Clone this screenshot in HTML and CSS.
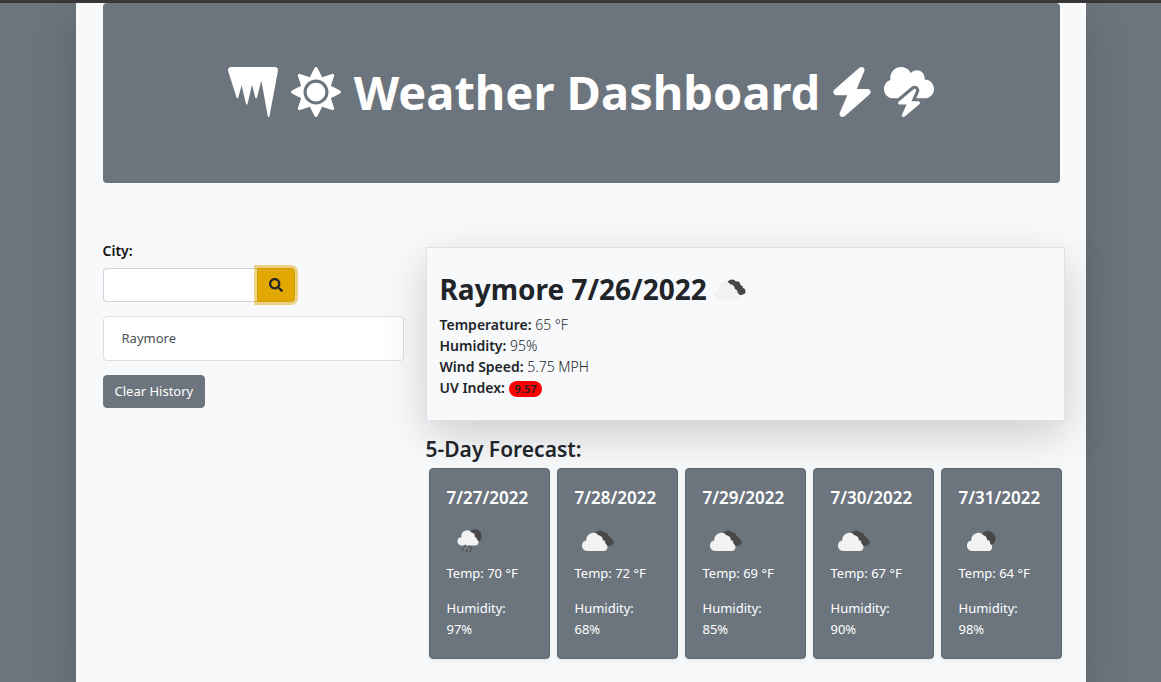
FILE: index.html
```html
<!DOCTYPE html>
<html lang="en">
<head>
<meta charset="utf-8">
<meta name="viewport" content="width=device-width, initial-scale=1">
<title>Weather Dashboard</title>
<link rel="stylesheet" href="styles.css">
</head>
<body>
<svg class="sprite" aria-hidden="true">
  <symbol id="clouds" viewBox="0 0 44 44">
    <path fill="#484848" d="M20 16a5 5 0 0 1 9-2.500a3.500 3.500 0 0 1 4.500 3.500a3 3 0 0 1 2.500 3a3.300 3.300 0 0 1-.5 6.500a4 4 0 0 1-5-1z"/>
    <path fill="#f2f2f2" d="M12 32a5.300 5.300 0 0 1-.7-10.500a7 7 0 0 1 12.200-5.200a5 5 0 0 1 4.300 4.600a3.400 3.400 0 0 1 2.600 3.700a4 4 0 0 1-.8 7.400z"/>
  </symbol>
  <symbol id="night-cloud" viewBox="0 0 44 44">
    <circle cx="29" cy="19.500" r="7.600" fill="#484848"/>
    <path fill="#f2f2f2" d="M13 32a5.300 5.300 0 0 1-.7-10.500a7 7 0 0 1 12.200-5.200a5 5 0 0 1 3.600 4.600a3.400 3.400 0 0 1 3 3.700a4 4 0 0 1-.8 7.400z"/>
  </symbol>
  <symbol id="night-rain" viewBox="0 0 44 44">
    <circle cx="28" cy="17" r="6.700" fill="#484848"/>
    <path fill="#f2f2f2" d="M15 26.500a4.300 4.300 0 0 1-.5-8.600a5.600 5.600 0 0 1 10-4.300a4 4 0 0 1 3.300 4.200a3 3 0 0 1 2.200 2.700a3.200 3.200 0 0 1-1.500 6z"/>
    <path stroke="#484848" stroke-width="1.400" stroke-linecap="round" d="M18.300 26.300l-.5 1M22.800 27.300l-.5 1M16.300 29.800l-.5 1M20 31.200l-.5 1M24.600 29l-.5 1M23.600 32l-.4.800"/>
  </symbol>
</svg>
<main class="page">
  <header class="banner">
    <h1 class="banner-title">
      <svg class="banner-icon" viewBox="0 0 512 512" aria-hidden="true"><path d="M511.400 37.900C515.100 18.200 500 0 480 0H32C10.600 0-4.800 20.700 1.400 41.200l87.100 273.400c2.500 7.200 12.700 7.200 15.100 0L140 190.500l44.200 187.300c1.900 8.300 13.700 8.300 15.600 0l46.500-196.900 34.100 133.400c2.300 7.600 13 7.600 15.300 0l45.800-172.500 66.700 363.800c1.700 8.600 14 8.600 15.700 0z"/></svg>
      <svg class="banner-icon" viewBox="0 0 512 512" aria-hidden="true"><path d="M256 160c-52.900 0-96 43.100-96 96s43.100 96 96 96 96-43.100 96-96-43.100-96-96-96zm246.400 80.500l-94.700-47.300 33.500-100.400c4.500-13.600-8.400-26.500-21.900-21.900l-100.400 33.500-47.400-94.800c-6.400-12.800-24.600-12.800-31 0l-47.300 94.700L92.700 70.800c-13.600-4.500-26.500 8.400-21.900 21.900l33.500 100.400-94.700 47.400c-12.800 6.400-12.800 24.600 0 31l94.700 47.300-33.500 100.500c-4.500 13.600 8.400 26.500 21.900 21.900l100.400-33.500 47.300 94.700c6.400 12.800 24.600 12.800 31 0l47.300-94.700 100.400 33.500c13.600 4.500 26.500-8.400 21.900-21.900l-33.500-100.400 94.700-47.300c13-6.500 13-24.700.2-31.100zm-155.900 106c-49.900 49.900-131.100 49.900-181 0-49.900-49.900-49.900-131.100 0-181 49.900-49.900 131.100-49.900 181 0 49.900 49.900 49.900 131.100 0 181z"/></svg>
      <span>Weather Dashboard</span>
      <svg class="banner-icon narrow" viewBox="0 0 384 512" aria-hidden="true"><path d="M240.500 224H352C365.300 224 377.300 232.300 381.100 244.700C386.600 257.200 383.100 271.300 373.100 280.100L117.100 504.100C105.800 513.900 89.270 514.700 77.190 505.900C65.100 497.100 60.700 481.100 66.590 467.400L143.500 288H31.100C18.670 288 6.733 279.700 2.044 267.300C-2.645 254.800 .8944 240.700 10.930 231.900L266.900 7.918C278.200-1.920 294.700-2.669 306.800 6.114C318.900 14.900 323.300 30.870 317.400 44.610L240.500 224z"/></svg>
      <svg class="banner-icon" viewBox="0 0 512 512" aria-hidden="true"><path d="M352 351.100h-71.250l47.440-105.400c3.062-6.781 1.031-14.810-4.906-19.310c-5.969-4.469-14.220-4.312-19.940 .4687l-153.600 128c-5.156 4.312-7.094 11.410-4.781 17.720c2.281 6.344 8.281 10.560 15.030 10.560h71.250l-47.440 105.400c-3.062 6.781-1.031 14.810 4.906 19.310C191.600 510.900 194.100 512 198.400 512c3.656 0 7.281-1.250 10.250-3.719l153.600-128c5.156-4.312 7.094-11.410 4.781-17.720C364.800 356.200 358.800 351.100 352 351.100zM416 128c-.625 0-1.125 .25-1.625 .25C415.500 123 416 117.600 416 112C416 67.750 380.300 32 336 32c-24.620 0-46.250 11.250-61 28.750C256.400 24.750 219.300 0 176 0C114.100 0 64 50.130 64 112c0 7.250 .75 14.250 2.125 21.250C27.750 145.800 0 181.500 0 224c0 53 43 96 96 96h46.630l140.200-116.800c8.605-7.195 19.530-11.160 30.760-11.160c10.340 0 20.600 3.416 29.030 9.734c17.960 13.610 24.020 37.450 14.760 57.950L330.200 320H416c53 0 96-43 96-96S469 128 416 128z"/></svg>
    </h1>
  </header>
  <div class="columns">
    <section class="search">
      <form class="search-form">
        <label class="search-label" for="city">City:</label>
        <div class="search-group">
          <input class="search-input" id="city" type="text">
          <button class="search-button" type="button" aria-label="Search">
            <svg class="search-icon" viewBox="0 0 512 512" aria-hidden="true"><path d="M505 442.700L405.300 343c-4.500-4.500-10.600-7-17-7H372c27.600-35.300 44-79.700 44-128C416 93.100 322.900 0 208 0S0 93.100 0 208s93.100 208 208 208c48.300 0 92.700-16.400 128-44v16.300c0 6.400 2.500 12.500 7 17l99.700 99.700c9.400 9.400 24.600 9.400 33.900 0l28.300-28.300c9.400-9.400 9.400-24.600.1-34zM208 336c-70.700 0-128-57.200-128-128 0-70.700 57.200-128 128-128 70.700 0 128 57.200 128 128 0 70.700-57.200 128-128 128z"/></svg>
          </button>
        </div>
      </form>
      <ul class="history">
        <li class="history-item">Raymore</li>
      </ul>
      <button class="clear-button" type="button">Clear History</button>
    </section>
    <section class="weather">
      <article class="current">
        <h2 class="current-title">Raymore 7/26/2022 <svg class="weather-icon" aria-hidden="true"><use href="#clouds"/></svg></h2>
        <p class="reading"><b>Temperature:</b> 65 °F</p>
        <p class="reading"><b>Humidity:</b> 95%</p>
        <p class="reading"><b>Wind Speed:</b> 5.75 MPH</p>
        <p class="reading"><b>UV Index:</b> <span class="uv">9.57</span></p>
      </article>
      <h3 class="forecast-title">5-Day Forecast:</h3>
      <div class="forecast">
        <article class="day"><h4 class="day-date">7/27/2022</h4><svg class="weather-icon" aria-hidden="true"><use href="#night-rain"/></svg><p class="day-text">Temp: 70 °F</p><p class="day-text">Humidity: 97%</p></article>
        <article class="day"><h4 class="day-date">7/28/2022</h4><svg class="weather-icon" aria-hidden="true"><use href="#clouds"/></svg><p class="day-text">Temp: 72 °F</p><p class="day-text">Humidity: 68%</p></article>
        <article class="day"><h4 class="day-date">7/29/2022</h4><svg class="weather-icon" aria-hidden="true"><use href="#clouds"/></svg><p class="day-text">Temp: 69 °F</p><p class="day-text">Humidity: 85%</p></article>
        <article class="day"><h4 class="day-date">7/30/2022</h4><svg class="weather-icon" aria-hidden="true"><use href="#clouds"/></svg><p class="day-text">Temp: 67 °F</p><p class="day-text">Humidity: 90%</p></article>
        <article class="day"><h4 class="day-date">7/31/2022</h4><svg class="weather-icon" aria-hidden="true"><use href="#night-cloud"/></svg><p class="day-text">Temp: 64 °F</p><p class="day-text">Humidity: 98%</p></article>
      </div>
    </section>
  </div>
</main>
</body>
</html>
```
FILE: styles.css
```css
* {
  box-sizing: border-box;
}

body {
  margin: 0;
  min-height: 100vh;
  display: flex;
  flex-direction: column;
  border-top: 3px solid #393637;
  background: #6c757d;
  color: #212529;
  font: 14px/21px "Noto Sans", "Open Sans", sans-serif;
}

h1, h2, h3, h4, p, ul {
  margin: 0;
  padding: 0;
}

.sprite {
  position: absolute;
  width: 0;
  height: 0;
}

.page {
  flex: 1;
  width: 100%;
  max-width: 1010px;
  margin: 0 auto;
  padding: 0 26px 22px 27px;
  background: #f8f9fb;
  box-shadow: 0 14px 42px rgba(0, 0, 0, 0.175);
}

.banner {
  padding: 57px 28px 59px;
  border-radius: 4px;
  background: #6c757d;
  color: #fff;
}

.banner-title {
  display: flex;
  justify-content: center;
  align-items: center;
  gap: 13px;
  font-size: 47px;
  line-height: 64px;
  white-space: nowrap;
}

.banner-icon {
  width: 50px;
  height: 50px;
  flex: none;
  fill: currentColor;
}

.banner-icon.narrow {
  width: 38px;
}

.columns {
  display: grid;
  grid-template-columns: 301fr 639fr;
  gap: 22px;
  margin-top: 57px;
  margin-right: -5px;
}

.search {
  display: flex;
  flex-direction: column;
  align-items: flex-start;
  gap: 14px;
}

.search-label {
  display: block;
  margin-bottom: 7px;
  font-weight: 600;
  color: #111;
}

.search-group {
  display: flex;
}

.search-input {
  width: 154px;
  height: 34px;
  padding: 5px 11px;
  border: 1px solid #ced4da;
  border-right: 0;
  border-radius: 4px 0 0 4px;
  background: #fff;
  font: inherit;
}

.search-button {
  display: flex;
  align-items: center;
  justify-content: center;
  width: 38px;
  height: 34px;
  padding: 0;
  border: 1px solid #d39e00;
  border-radius: 0 4px 4px 0;
  background: #e0a800;
  color: #212529;
  box-shadow: 0 0 0 3px rgba(222, 170, 12, 0.5);
}

.search-icon {
  width: 14px;
  height: 14px;
  fill: currentColor;
}

.history {
  width: 100%;
  list-style: none;
}

.history-item {
  padding: 11px 18px;
  border: 1px solid #dfdfdf;
  border-radius: 4px;
  background: #fff;
  color: #495057;
  font-size: 13px;
}

.clear-button {
  padding: 5px 11px;
  border: 1px solid #6c757d;
  border-radius: 4px;
  background: #6c757d;
  color: #fff;
  font: inherit;
  font-size: 13px;
}

.weather {
  padding-top: 7px;
}

.current {
  padding: 19px 13px 22px;
  border: 1px solid #dee2e6;
  background: #f8f9fb;
  box-shadow: 0 14px 42px rgba(0, 0, 0, 0.175);
}

.current-title {
  display: flex;
  align-items: center;
  margin-bottom: 2px;
  font-size: 28px;
  line-height: 45px;
  font-weight: 700;
}

.weather-icon {
  display: block;
  width: 44px;
  height: 44px;
  flex: none;
}

.reading {
  font-weight: 300;
}

.reading b {
  font-weight: 600;
}

.uv {
  display: inline-block;
  padding: 0 6px;
  border-radius: 8px;
  background: #f00;
  font-size: 11px;
  line-height: 16px;
  font-weight: 600;
}

.forecast-title {
  margin-top: 15px;
  font-size: 21px;
  line-height: 26px;
  font-weight: 600;
}

.forecast {
  display: grid;
  grid-template-columns: repeat(5, 1fr);
  gap: 7px;
  margin-top: 6px;
  padding: 0 3px;
}

.day {
  padding: 18px 0 18px 17px;
  border: 1px solid #5f6870;
  border-radius: 4px;
  background: #6c757d;
  color: #fff;
  box-shadow: 0 2px 4px rgba(0, 0, 0, 0.075);
}

.day-date {
  margin-bottom: 10px;
  font-size: 17px;
  line-height: 22px;
  font-weight: 600;
}

.day-text {
  margin-right: 17px;
  font-size: 13px;
}

.day-text + .day-text {
  margin-top: 14px;
}
```
